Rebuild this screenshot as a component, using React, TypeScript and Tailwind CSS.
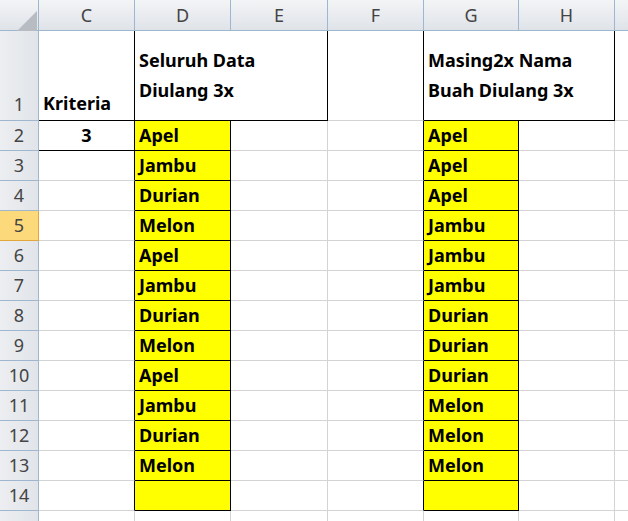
import React from "react";

const letters = ["", "C", "D", "E", "F", "G", "H", ""];
const dList = ["Apel","Jambu","Durian","Melon","Apel","Jambu","Durian","Melon","Apel","Jambu","Durian","Melon",""];
const gList = ["Apel","Apel","Apel","Jambu","Jambu","Jambu","Durian","Durian","Durian","Melon","Melon","Melon",""];

export default function App() {
  const cells: React.ReactNode[] = [];
  for (let c = 0; c < 8; c++) {
    cells.push(
      <div key={`h${c}`} className="flex items-center justify-center border-r border-b border-[#9eb6ce] bg-gradient-to-b from-[#f3f4f6] to-[#dfe3e8] text-[18px] text-[#444]">
        {c === 0 ? (
          <div className="w-0 h-0 ml-4 mt-3 border-l-[20px] border-l-transparent border-b-[20px] border-b-[#b7bcc3]" />
        ) : (
          letters[c]
        )}
      </div>
    );
  }
  for (let r = 1; r <= 15; r++) {
    const sel = r === 5;
    cells.push(
      <div key={`r${r}`} className={`flex justify-center border-r border-b text-[18px] text-[#444] ${r === 1 ? "items-end pb-[2px]" : "items-center"} ${sel ? "bg-[#fcd97b] border-[#e3a63a]" : "bg-gradient-to-r from-[#eceef1] to-[#e1e4e9] border-[#9eb6ce]"}`}>
        {r <= 14 ? r : ""}
      </div>
    );
    if (r === 1) {
      cells.push(<div key="c1" className="border-r border-b border-r-black border-b-black flex items-end pl-[4px] pb-[3px] font-bold text-[18px]">Kriteria</div>);
      cells.push(<div key="d1" className="col-span-2 border-r border-b border-black flex flex-col justify-center pl-[4px] font-bold text-[18px] leading-[30px] pb-[2px]"><span>Seluruh Data</span><span>Diulang 3x</span></div>);
      cells.push(<div key="f1" className="border-r border-b border-r-black border-b-[#d4d4d4]" />);
      cells.push(<div key="g1" className="col-span-2 border-r border-b border-black flex flex-col justify-center pl-[4px] font-bold text-[18px] leading-[30px] pb-[2px]"><span>Masing2x Nama</span><span>Buah Diulang 3x</span></div>);
      cells.push(<div key="i1" className="border-b border-[#d4d4d4]" />);
      continue;
    }
    const inData = r >= 2 && r <= 14;
    for (let c = 1; c < 8; c++) {
      let cls = "border-b border-[#d4d4d4] flex items-center font-bold text-[18px]";
      if (c !== 7) cls += " border-r";
      let content: React.ReactNode = null;
      if (c === 1) {
        if (inData) cls += " border-r-black";
        if (r === 2) { cls += " border-b-black justify-center"; content = "3"; }
      }
      if (c === 2 && inData) { cls += " bg-[#ffff00] border-black pl-[4px]"; content = dList[r - 2]; }
      if (c === 4 && inData) cls += " border-r-black";
      if (c === 5 && inData) { cls += " bg-[#ffff00] border-black pl-[4px]"; content = gList[r - 2]; }
      cells.push(<div key={`${r}-${c}`} className={cls}>{content}</div>);
    }
  }
  return (
    <div className="w-[628px] h-[521px] overflow-hidden bg-white text-black font-['Lato','Open_Sans',sans-serif]">
      <div className="grid grid-cols-[39px_96px_96px_97px_96px_95px_96px_40px] grid-rows-[31px_90px_repeat(14,30px)]">
        {cells}
      </div>
    </div>
  );
}
